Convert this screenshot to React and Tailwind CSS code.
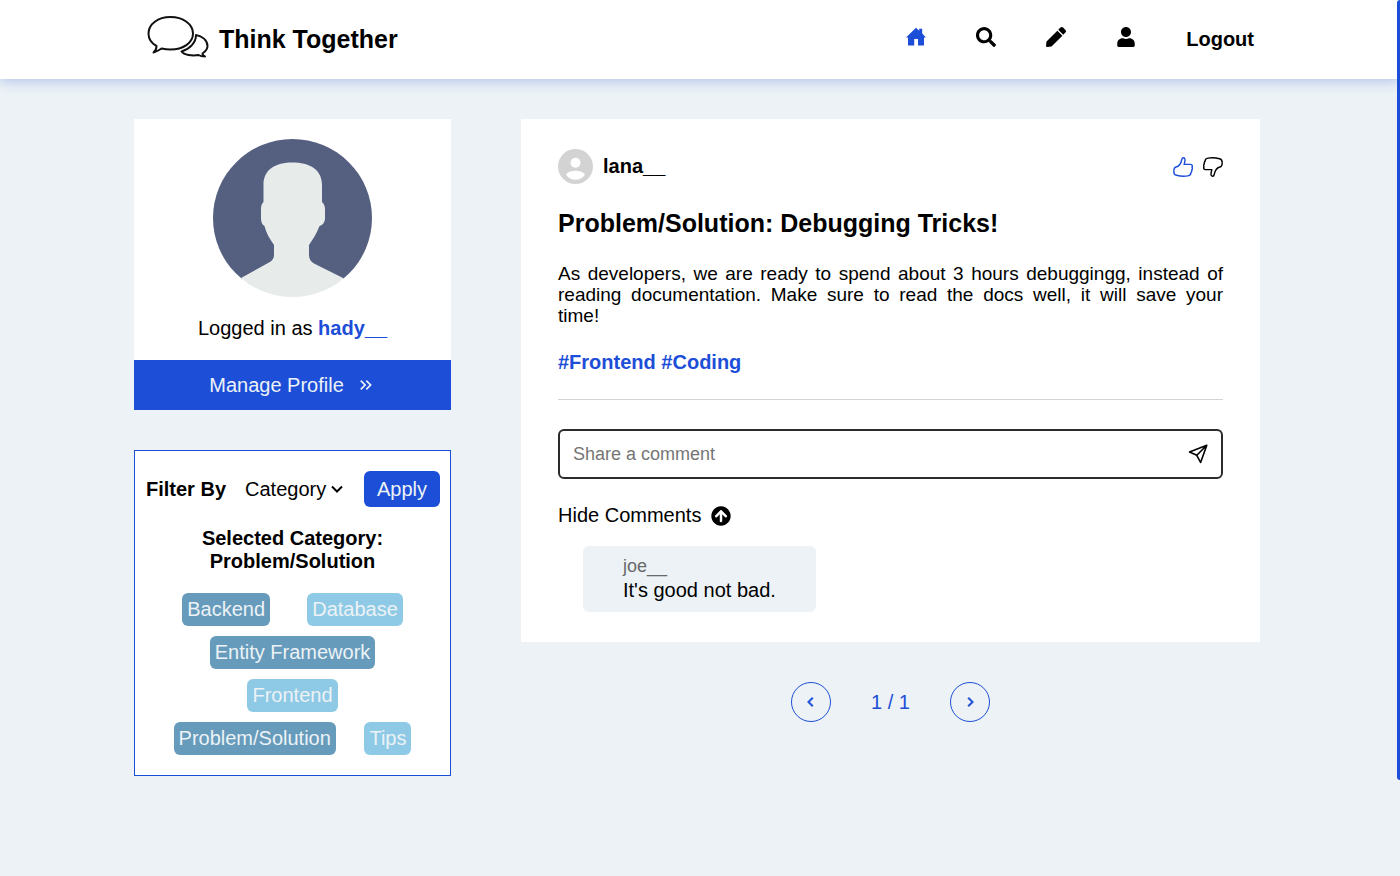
import { FaSearch, FaPen, FaUser, FaArrowCircleUp } from "react-icons/fa";
import { MdKeyboardDoubleArrowRight } from "react-icons/md";
import { BiChevronLeft, BiChevronRight } from "react-icons/bi";

const tags = [
  ["Backend", "Database"],
  ["Entity Framework"],
  ["Frontend"],
  ["Problem/Solution", "Tips"],
];
const dark = new Set(["Backend", "Entity Framework", "Problem/Solution"]);

function Logo() {
  return (
    <svg viewBox="0 0 62 44" className="mb-1 h-11 w-[62px]" fill="none" stroke="#111" strokeWidth="2" strokeLinejoin="round" aria-hidden="true">
      <path d="M9.5 31C4 28 1.500 23 1.500 18.500C1.500 9 11 2 23.500 2S46 9 46 18.500S36 34.500 23.500 34.500C20 34.500 17 34 14.500 33.500C12 35.500 9 36.500 6.500 37.500C8.500 36 9.500 33.500 9.500 31Z" />
      <path d="M49 20C55 21 60.500 25 60.500 31C60.500 34 58.500 36.500 55.500 38.500C55.500 39.800 56.500 41 58 41.500C55.500 41.500 53 41 51.500 40C45 41 37 40 34.500 36.500C43 34 49 27.500 49 20Z" />
    </svg>
  );
}

function Avatar() {
  return (
    <svg viewBox="0 0 159 158" className="mx-auto h-[158px] w-[159px]" role="img" aria-label="Profile picture">
      <clipPath id="avatar-clip"><ellipse cx="79.5" cy="79" rx="79.5" ry="79" /></clipPath>
      <g clipPath="url(#avatar-clip)">
        <rect width="159" height="140" fill="#556080" />
        <path d="M79.500 23.500C96 23.500 109 30 109 46V63C111 65 112 67 112 70V79C112 83 110 86 106.500 87C104 94 100 100 96 106V116C96 120 98 123 101 124.500L131 139.500V158H28V139L56 123.500C59 122 61 119.500 61 116V106C57 100 53 94 51.500 87C49 85.500 48 83 48 79V70C48 67 48.500 65 50.500 63V46C50.500 30 63 23.500 79.500 23.500Z" fill="#e7eceb" />
      </g>
    </svg>
  );
}

function UserBadge() {
  return (
    <svg viewBox="0 0 35 35" className="size-[35px]" aria-hidden="true">
      <circle cx="17.5" cy="17.5" r="17.5" fill="#d3d3d3" />
      <circle cx="17.5" cy="13.7" r="5" fill="#fff" />
      <path d="M8 25.500C10 22.800 14.500 21.800 17.500 21.800S25 22.800 27 25.500C25 29 21.500 30.800 17.500 30.800S10 29 8 25.500Z" fill="#fff" />
    </svg>
  );
}

function Home() {
  return (
    <svg viewBox="0 0 20 20" className="size-5" fill="currentColor" aria-hidden="true">
      <path d="M10 .8L0 10.400H2V18.600H8.200V12H12V18.600H18V10.400H20L16.200 6.600V1.700H13.200V3.800Z" />
    </svg>
  );
}

function Thumb({ className }) {
  return (
    <svg viewBox="0 0 20 20" className={className} fill="none" stroke="currentColor" strokeWidth="1.4" strokeLinejoin="round" aria-hidden="true">
      <path d="M10.300 .8C11.800 .8 12.200 2.500 11.900 4L11.200 7.400H17.500C19.300 7.500 19.700 9 19 10.200C19.600 11.200 19.400 12.300 18.700 13C19 14.200 18.700 15 18 15.600C18 17.500 17 18.600 15 18.900C11.500 19.400 7 19.200 3.500 18.300C1.600 17.800 .8 16.500 .8 14.500C.8 12 1.200 10.400 3 10C6 9.400 8 6.500 8.800 2.500C9 1.500 9.500 .8 10.300 .8Z" />
    </svg>
  );
}

export default function App() {
  return (
    <div className="min-h-screen bg-[#ecf2f5] font-['Liberation_Sans',Arial,sans-serif] text-xl leading-[23px] text-black">
      <div className="absolute top-0 right-0 h-[780px] w-[3px] rounded-l-sm bg-[#1d4ed8]" />
      <header className="bg-white shadow-[0_2px_12px_rgba(29,78,216,0.3)]">
        <div className="mx-auto flex h-[79px] max-w-[1108px] items-center justify-between pl-px">
          <a href="#home" className="flex items-center gap-2.5 pb-0.5 text-[25px] font-bold leading-7">
            <Logo />
            <span>Think Together</span>
          </a>
          <nav className="flex items-center gap-[50px]">
            <a href="#home" aria-label="Home" className="pb-1.5 text-[#1d4ed8]"><Home /></a>
            <a href="#search" aria-label="Search" className="pb-1.5"><FaSearch /></a>
            <a href="#write" aria-label="Write" className="pb-1.5"><FaPen /></a>
            <a href="#profile" aria-label="Profile" className="pb-1.5"><FaUser /></a>
            <button type="button" className="font-bold">Logout</button>
          </nav>
        </div>
      </header>

      <div className="mx-auto flex max-w-[1132px] items-start gap-[70px] pt-10 pr-1.5">
        <aside className="flex w-[317px] shrink-0 flex-col gap-10">
          <section className="bg-white pt-5">
            <Avatar />
            <p className="my-5 text-center">
              Logged in as <a href="#profile" className="font-bold text-[#1d4ed8]">hady__</a>
            </p>
            <a href="#manage" className="flex h-[50px] items-center justify-center gap-3 bg-[#1d4ed8] text-[#ecf2f5]">
              Manage Profile <MdKeyboardDoubleArrowRight />
            </a>
          </section>

          <section className="border border-[#1d4ed8] bg-white px-2.5 py-5">
            <div className="flex items-center justify-between pl-px">
              <label htmlFor="filter" className="font-bold">Filter By</label>
              <div className="grid items-center">
                <select id="filter" className="col-start-1 row-start-1 w-[100px] appearance-none bg-transparent">
                  <option>Category</option>
                </select>
                <svg viewBox="0 0 12 8" className="pointer-events-none col-start-1 row-start-1 mr-0.5 h-2 w-3 justify-self-end" fill="none" stroke="currentColor" strokeWidth="2" aria-hidden="true"><path d="M1 1.500L6 6.500L11 1.500" /></svg>
              </div>
              <button type="button" className="h-9 w-[76px] rounded-md bg-[#1d4ed8] text-[#ecf2f5]">Apply</button>
            </div>
            <h2 className="mt-5 text-center font-bold">Selected Category:<br />Problem/Solution</h2>
            <div className="mt-5 flex flex-col gap-2.5">
              {tags.map((row) => (
                <div key={row[0]} className="flex justify-evenly">
                  {row.map((tag) => (
                    <button key={tag} type="button" className={`h-[33px] rounded-md px-[5px] text-[#ecf2f5] ${dark.has(tag) ? "bg-[#669bbc]" : "bg-[#8ecae6]"}`}>{tag}</button>
                  ))}
                </div>
              ))}
            </div>
          </section>
        </aside>

        <main className="min-w-0 flex-1">
          <article className="bg-white px-[37px] py-[30px]">
            <div className="flex items-center justify-between">
              <div className="flex items-center gap-2.5 font-bold">
                <UserBadge />
                <span>lana__</span>
              </div>
              <div className="flex gap-2.5">
                <button type="button" aria-label="Like" className="text-[#1d4ed8]"><Thumb className="size-5" /></button>
                <button type="button" aria-label="Dislike"><Thumb className="size-5 rotate-180" /></button>
              </div>
            </div>
            <h1 className="mt-[25px] text-[25px] font-bold leading-7">Problem/Solution: Debugging Tricks!</h1>
            <p className="mt-[26px] text-[19px] leading-[21px]">
              <span className="block text-justify [text-align-last:justify]">
                As developers, we are ready to spend about 3 hours debuggingg, instead of reading documentation. Make sure to read the docs well, it will save your
              </span>{" "}
              time!
            </p>
            <p className="mt-[25px] font-bold text-[#1d4ed8]">
              <a href="#frontend">#Frontend</a> <a href="#coding">#Coding</a>
            </p>
            <hr className="mt-[25px] border-[#d3d3d3]" />
            <form className="mt-[29px] flex h-[50px] items-center rounded-md border-2 border-[#2b2b2b] px-[13px]" onSubmit={(e) => e.preventDefault()}>
              <input aria-label="Share a comment" placeholder="Share a comment" className="min-w-0 flex-1 text-lg outline-none placeholder:text-[#757575]" />
              <button type="submit" aria-label="Send comment">
                <svg viewBox="0 0 20 20" className="size-5" fill="none" stroke="currentColor" strokeWidth="1.6" strokeLinejoin="round"><path d="M18.800 1.200L1.500 8L8.800 11.300L12.600 18.500ZM8.800 11.300L18.800 1.200" /></svg>
              </button>
            </form>
            <button type="button" className="mt-[25px] flex items-center gap-2.5">
              Hide Comments <FaArrowCircleUp />
            </button>
            <div className="mt-[19px] ml-[25px] w-fit rounded-md bg-[#ecf2f5] px-10 py-2.5">
              <div className="text-lg leading-[21px] text-[#696969]">joe__</div>
              <p className="mt-0.5">It's good not bad.</p>
            </div>
          </article>
          <div className="mt-10 flex items-center justify-center gap-10 text-[#1d4ed8]">
            <button type="button" aria-label="Previous page" className="flex size-10 items-center justify-center rounded-full border border-[#1d4ed8]"><BiChevronLeft className="stroke-current stroke-[0.5]" /></button>
            <span>1 / 1</span>
            <button type="button" aria-label="Next page" className="flex size-10 items-center justify-center rounded-full border border-[#1d4ed8]"><BiChevronRight className="stroke-current stroke-[0.5]" /></button>
          </div>
        </main>
      </div>
    </div>
  );
}
